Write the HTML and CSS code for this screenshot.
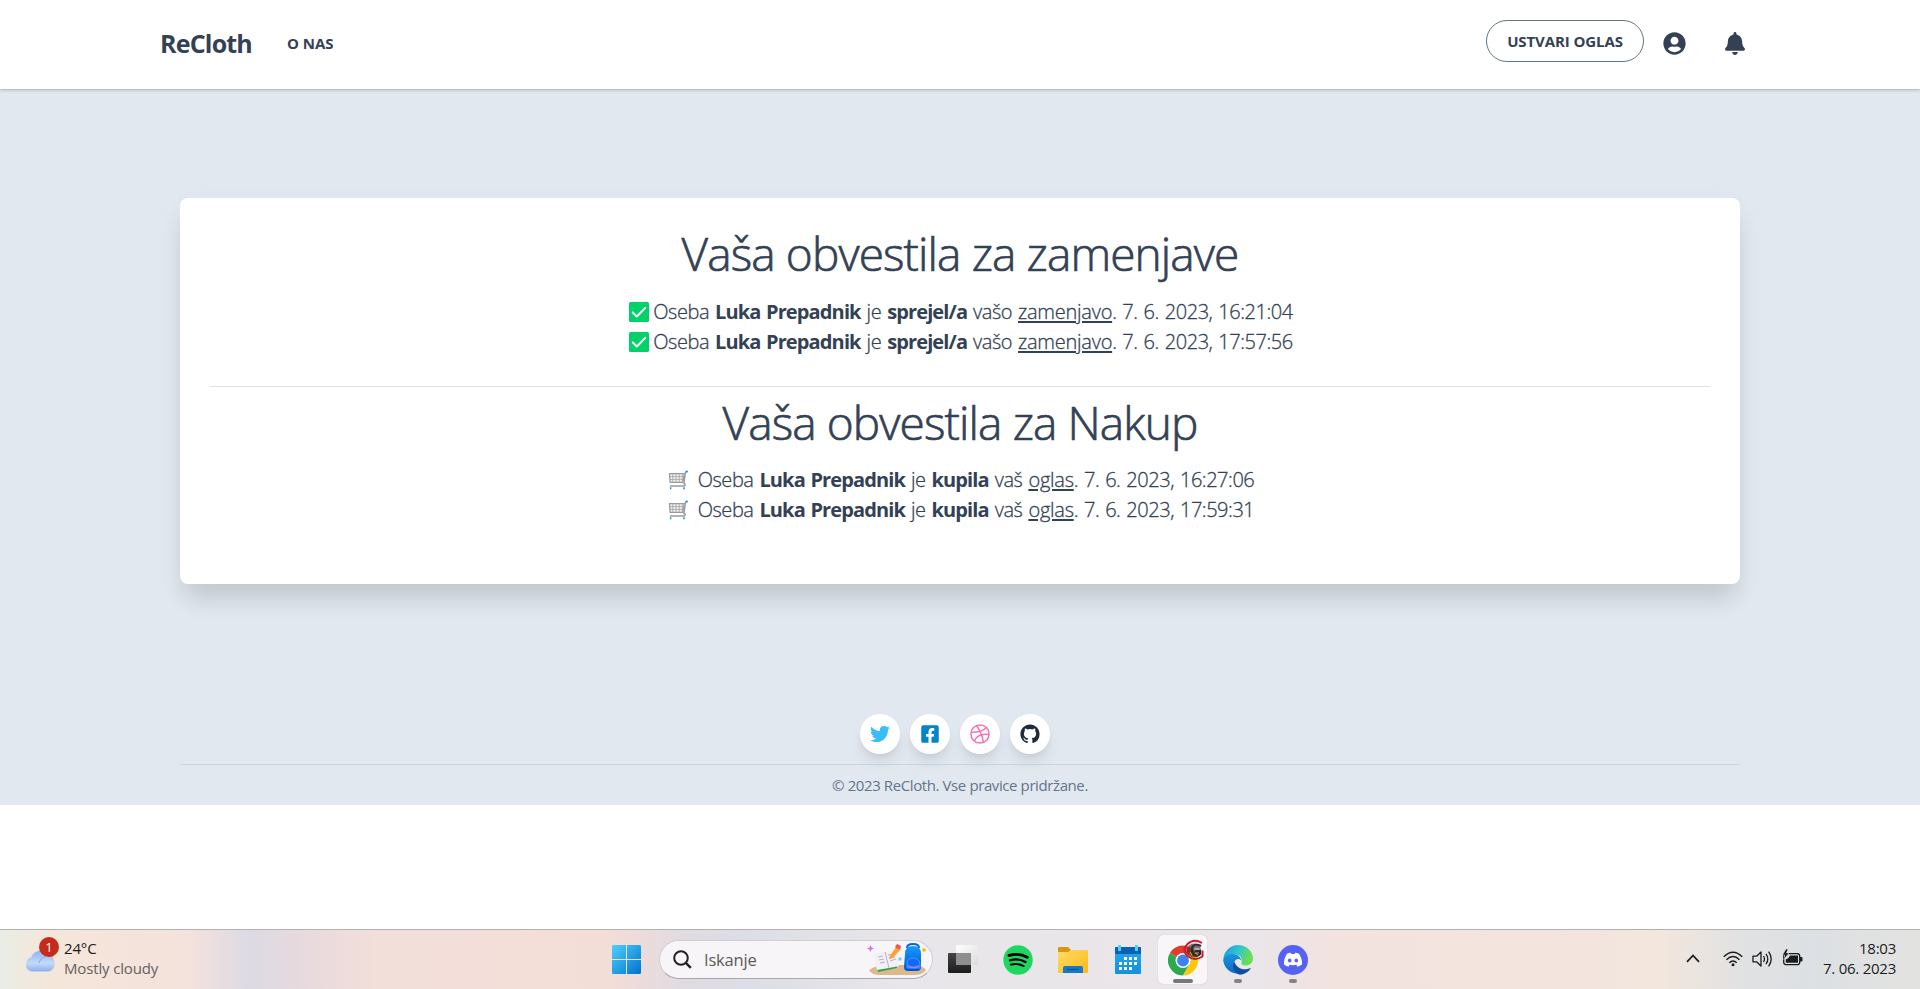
FILE: index.html
```html
<!DOCTYPE html>
<html lang="sl">
<head>
<meta charset="utf-8">
<title>ReCloth</title>
<link rel="stylesheet" href="styles.css">
</head>
<body>
<svg width="0" height="0" class="defs">
  <defs>
    <linearGradient id="win" x1="0" y1="0" x2="1" y2="1"><stop offset="0" stop-color="#4fd0fb"/><stop offset="1" stop-color="#0072d0"/></linearGradient>
    <linearGradient id="cloud" x1="0" y1="0" x2="0" y2="1"><stop offset="0" stop-color="#8fb2ee"/><stop offset=".6" stop-color="#c4daf8"/><stop offset="1" stop-color="#8baeec"/></linearGradient>
    <linearGradient id="folder" x1="0" y1="0" x2="1" y2="1"><stop offset="0" stop-color="#ffdc66"/><stop offset="1" stop-color="#fbb917"/></linearGradient>
    <linearGradient id="cal" x1="0" y1="0" x2="0" y2="1"><stop offset="0" stop-color="#28a8ea"/><stop offset="1" stop-color="#1490df"/></linearGradient>
    <linearGradient id="dark" x1="0" y1="0" x2="0" y2="1"><stop offset="0" stop-color="#444"/><stop offset="1" stop-color="#1c1c1c"/></linearGradient>
    <linearGradient id="pane" x1="0" y1="0" x2="1" y2="1"><stop offset="0" stop-color="#fff"/><stop offset="1" stop-color="#dcdcdc"/></linearGradient>
    <linearGradient id="edgeTop" x1="0" y1="0" x2="1" y2=".35"><stop offset="0" stop-color="#1a93d8"/><stop offset=".5" stop-color="#2fc2d6"/><stop offset="1" stop-color="#6be04f"/></linearGradient>
    <linearGradient id="edgeLeft" x1="0" y1="0" x2="0" y2="1"><stop offset="0" stop-color="#1796dc"/><stop offset="1" stop-color="#1268c4"/></linearGradient>
    <linearGradient id="bag" x1="0" y1="0" x2="0" y2="1"><stop offset="0" stop-color="#169bff"/><stop offset="1" stop-color="#0050d8"/></linearGradient>
    <symbol id="check" viewBox="0 0 20 20"><rect width="20" height="20" rx="1.6" fill="#00d26a"/><path d="M3.8 10.4l4 4.1 8.4-8.6" fill="none" stroke="#f4f4f4" stroke-width="2.1" stroke-linecap="round" stroke-linejoin="round"/></symbol>
    <symbol id="cart" viewBox="0 0 22 20"><g fill="none" stroke="#9b9b9b"><path d="M1.500 3.300H17L15.600 12.500H2.200z" stroke-width="1.300" fill="#efefef"/><path d="M5 3.500v9M8.400 3.500v9M11.800 3.500v9M15 3.500v9M2 6.400h14.500M2 9.400h14" stroke-width=".7"/><path d="M20 1.200L18.300 2 16.600 13.700q1.800.4 1.400 1.700l-.8.9H2.200" stroke-width="1.500"/></g><path d="M18.400 .4h2.400v1.500h-2.400zM2 17.600h1.500v2H2zM15.900 17.600h1.600v2h-1.600z" fill="#218fc8"/></symbol>
  </defs>
</svg>

<nav class="navbar">
  <div class="nav-left">
    <a class="brand">ReCloth</a>
    <a class="nav-link">O NAS</a>
  </div>
  <div class="nav-right">
    <a class="create">USTVARI OGLAS</a>
    <svg class="user" viewBox="0 0 496 512"><path fill="currentColor" d="M248 8C111 8 0 119 0 256s111 248 248 248 248-111 248-248S385 8 248 8zm0 96c48.600 0 88 39.400 88 88s-39.400 88-88 88-88-39.400-88-88 39.400-88 88-88zm0 344c-58.700 0-111.300-26.600-146.500-68.200 18.800-35.400 55.600-59.800 98.500-59.800 2.400 0 4.800.4 7.100 1.100 13 4.200 26.600 6.900 40.900 6.900 14.300 0 28-2.700 40.900-6.900 2.300-.7 4.700-1.100 7.100-1.100 42.900 0 79.700 24.400 98.500 59.800C359.300 421.400 306.700 448 248 448z"/></svg>
    <svg class="bell" viewBox="0 0 448 512"><path fill="currentColor" d="M224 512c35.320 0 63.970-28.650 63.970-64H160.030c0 35.350 28.650 64 63.970 64zm215.390-149.710c-19.320-20.760-55.470-51.990-55.470-154.290 0-77.700-54.480-139.900-127.940-155.160V32c0-17.670-14.320-32-31.980-32s-31.980 14.330-31.980 32v20.840C118.560 68.100 64.080 130.300 64.080 208c0 102.300-36.150 133.530-55.470 154.290-6 6.450-8.660 14.160-8.610 21.710.11 16.400 12.980 32 32.100 32h383.800c19.120 0 32-15.600 32.100-32 .05-7.550-2.610-15.270-8.610-21.710z"/></svg>
  </div>
</nav>

<main class="page">
  <section class="card">
    <h1 class="title">Vaša obvestila za zamenjave</h1>
    <ul class="list">
      <li class="item"><svg class="check"><use href="#check"/></svg><span>Oseba <b>Luka Prepadnik</b> je <b>sprejel/a</b> vašo <a>zamenjavo</a>. 7. 6. 2023, 16:21:04</span></li>
      <li class="item"><svg class="check"><use href="#check"/></svg><span>Oseba <b>Luka Prepadnik</b> je <b>sprejel/a</b> vašo <a>zamenjavo</a>. 7. 6. 2023, 17:57:56</span></li>
    </ul>
    <hr class="rule">
    <h1 class="title">Vaša obvestila za Nakup</h1>
    <ul class="list">
      <li class="item"><svg class="cart"><use href="#cart"/></svg><span>Oseba <b>Luka Prepadnik</b> je <b>kupila</b> vaš <a>oglas</a>. 7. 6. 2023, 16:27:06</span></li>
      <li class="item"><svg class="cart"><use href="#cart"/></svg><span>Oseba <b>Luka Prepadnik</b> je <b>kupila</b> vaš <a>oglas</a>. 7. 6. 2023, 17:59:31</span></li>
    </ul>
  </section>

  <footer class="footer">
    <div class="social">
      <a class="dot twitter"><svg width="20" height="20" viewBox="0 0 512 512"><path fill="currentColor" d="M459.370 151.716c.325 4.548.325 9.097.325 13.645 0 138.720-105.583 298.558-298.558 298.558-59.452 0-114.680-17.219-161.137-47.106 8.447.974 16.568 1.299 25.340 1.299 49.055 0 94.213-16.568 130.274-44.832-46.132-.975-84.792-31.188-98.112-72.772 6.498.974 12.995 1.624 19.818 1.624 9.421 0 18.843-1.300 27.614-3.573-48.081-9.747-84.143-51.980-84.143-102.985v-1.299c13.969 7.797 30.214 12.670 47.431 13.319-28.264-18.843-46.781-51.005-46.781-87.391 0-19.492 5.197-37.360 14.294-52.954 51.655 63.675 129.300 105.258 216.365 109.807-1.624-7.797-2.599-15.918-2.599-24.040 0-57.828 46.782-104.934 104.934-104.934 30.213 0 57.502 12.670 76.670 33.137 23.715-4.548 46.456-13.320 66.599-25.340-7.798 24.366-24.366 44.833-46.132 57.827 21.117-2.273 41.584-8.122 60.426-16.243-14.292 20.791-32.161 39.308-52.628 54.253z"/></svg></a>
      <a class="dot facebook"><svg width="18" height="20" viewBox="0 0 448 512"><path fill="currentColor" d="M400 32H48A48 48 0 0 0 0 80v352a48 48 0 0 0 48 48h137.250V327.690h-63V256h63v-54.640c0-62.150 37-96.480 93.670-96.480 27.140 0 55.520 4.840 55.520 4.840v61h-31.270c-30.810 0-40.420 19.120-40.420 38.730V256h68.780l-11 71.690h-57.780V480H400a48 48 0 0 0 48-48V80a48 48 0 0 0-48-48z"/></svg></a>
      <a class="dot dribbble"><svg width="20" height="20" viewBox="0 0 20 20" fill="none" stroke="currentColor" stroke-width="1.500"><circle cx="10" cy="10" r="9.100"/><path d="M6.500 1.700C10 6.200 12.300 11 13.500 18.300M1 8.200C7 8.500 12.500 7.300 16.300 3.400M4.200 16.900C6.800 12 12 9.400 19 10.600"/></svg></a>
      <a class="dot github"><svg width="20" height="20" viewBox="0 0 24 24"><path fill="currentColor" d="M12 .5C5.650.5.500 5.650.500 12c0 5.080 3.290 9.390 7.860 10.910.58.11.79-.25.79-.55v-2.100c-3.200.7-3.870-1.370-3.870-1.370-.52-1.330-1.280-1.680-1.280-1.680-1.040-.71.080-.7.080-.7 1.160.08 1.770 1.190 1.770 1.190 1.030 1.760 2.700 1.250 3.350.96.100-.75.400-1.250.73-1.540-2.550-.29-5.240-1.280-5.240-5.680 0-1.260.45-2.280 1.180-3.090-.12-.29-.51-1.460.11-3.040 0 0 .97-.31 3.160 1.180a10.900 10.900 0 0 1 5.760 0c2.190-1.490 3.150-1.180 3.150-1.180.63 1.580.24 2.750.12 3.040.74.810 1.180 1.830 1.180 3.090 0 4.410-2.690 5.390-5.250 5.670.41.360.78 1.060.78 2.130v3.120c0 .3.210.66.790.55A11.500 11.500 0 0 0 23.500 12C23.500 5.650 18.350.5 12 .5z"/></svg></a>
    </div>
    <div class="copyright">© 2023 ReCloth. Vse pravice pridržane.</div>
  </footer>
</main>

<div class="taskbar">
  <div class="weather">
    <div class="weather-icon">
      <svg width="32" height="38" viewBox="0 0 32 38"><circle cx="22" cy="17" r="7.500" fill="#f28a1c"/><path d="M8 34.500a7.200 7.200 0 0 1-1-14 9.500 9.500 0 0 1 17-2.200 8.300 8.300 0 0 1 .6 16.200z" fill="url(#cloud)"/><path d="M15 26c2-6 7-8 11-6.500" fill="none" stroke="#7fa4e6" stroke-width="1"/></svg>
      <span class="badge">1</span>
    </div>
    <div class="weather-text"><div>24°C</div><div class="muted">Mostly cloudy</div></div>
  </div>
  <div class="apps">
    <svg class="start" width="29" height="29" viewBox="0 0 29 29" fill="url(#win)"><path d="M1.500 0H14v14H0V1.500Q0 0 1.500 0zM15 0h12.500Q29 0 29 1.500V14H15zM0 15h14v14H1.500Q0 29 0 27.500zM15 15h14v12.500q0 1.500-1.500 1.500H15z"/></svg>
    <div class="search">
      <svg width="19" height="19" viewBox="0 0 19 19" fill="none" stroke="#222" stroke-width="2"><circle cx="8" cy="8" r="6.800"/><path d="M12.800 12.800l5 5" stroke-width="2.400"/></svg>
      <span class="search-label">Iskanje</span>
      <svg class="art" width="60" height="34" viewBox="0 0 60 34"><path d="M2 27q7-5 20-5h24q11 1 13 5-3 5-12 5H14Q4 32 2 27z" fill="#dcb98d"/><path d="M8 12l17-4 5 17-19 4z" fill="#31a04d"/><path d="M7 11l10-2 2 0 9-3 4 17-10 2-12 2z" fill="#f3f0fa"/><path d="M18 9l4 16M11 14l5-1M12 17l5-1M13 20l5-1M21 12l6-1M22 15l6-1M23 18l6-2" stroke="#a6a0be" stroke-width=".8"/><path d="M23 13l6-9 4 3-7 8-4 1z" fill="#ffa32d"/><path d="M28 4l2-3 4 2-1 4z" fill="#ef5350"/><path d="M40 5q0-4 6-4t6 4" fill="none" stroke="#0767cf" stroke-width="2"/><path d="M38 11q0-8 8-8t8 8v13q0 4-4 4h-9q-4 0-4-4z" fill="url(#bag)"/><path d="M40 21q0-6 6-6t7 6v4H40z" fill="#126af4" stroke="#2fa6ff"/><path d="M41 23q5 3 11 0" fill="none" stroke="#b47bf5" stroke-width="1.500"/><path d="M3.500 2l1 2.500L7 5.500 4.500 6.500l-1 2.500-1-2.500L0 5.500l2.500-1z" fill="#d66cf3"/><circle cx="57" cy="7" r="1.800" fill="#ffb000"/><circle cx="33" cy="16" r="1.800" fill="#6ad7f4"/></svg>
    </div>
    <div class="app"><svg width="32" height="32" viewBox="0 0 32 32"><rect x="1" y="9" width="23" height="20" rx="1" fill="url(#dark)"/><rect x="9" y="1" width="22" height="20" rx="1" fill="url(#pane)"/><path d="M9 9h15v12H9z" fill="#8f8f8f"/></svg></div>
    <div class="app"><svg width="30" height="30" viewBox="0 0 30 30"><circle cx="15" cy="15" r="14.700" fill="#1ed760"/><g fill="none" stroke="#000" stroke-linecap="round"><path d="M6 10.500q10-3 18.300 1.700" stroke-width="2.900"/><path d="M7 15.300q8.500-2.300 15.500 1.700" stroke-width="2.300"/><path d="M7.700 19.600q7-1.800 13 1.500" stroke-width="1.900"/></g></svg></div>
    <div class="app"><svg width="30" height="28" viewBox="0 0 30 28"><path d="M0 2q0-1 1-1h9l3 3-3 4H0z" fill="#d9970c"/><path d="M0 6h10l3-2h16q1 0 1 1v21q0 1-1 1H0z" fill="url(#folder)"/><path d="M5 27v-5q0-2 2-2h16q2 0 2 2v5z" fill="#1478cc"/><path d="M9 23.500h12" stroke="#0b4c91" stroke-width="1.200"/></svg></div>
    <div class="app"><svg width="26" height="29" viewBox="0 0 26 29"><rect y="2" width="26" height="27" rx="1" fill="url(#cal)"/><path d="M1 2h24q1 0 1 1v6H0V3q0-1 1-1z" fill="#0862b4"/><path d="M3 0h3v6H3zM20 0h3v6h-3z" fill="#51d0f4"/><path d="M9 12h3v3H9zM14 12h3v3h-3zM19 12h3v3h-3zM4 17h3v3H4zM9 17h3v3H9zM14 17h3v3h-3zM19 17h3v3h-3zM4 22h3v3H4zM9 22h3v3H9zM14 22h3v3h-3z" fill="#fff"/></svg></div>
    <div class="app active">
      <svg class="chrome" width="36" height="38" viewBox="0 0 36 38"><path d="M15 22.500L2 15A15 15 0 0 1 28 15z" fill="#e33b2e"/><path d="M2 15A15 15 0 0 0 15 37.500L21.500 26.300 15 22.500z" fill="#2da94f"/><path d="M28 15a15 15 0 0 1-13 22.500l6.500-11.200V15z" fill="#fdc70c"/><circle cx="15" cy="22.500" r="7.500" fill="#fff"/><circle cx="15" cy="22.500" r="5.900" fill="#3b83f0"/><circle cx="26" cy="12.500" r="7" fill="#4a3432" opacity=".7"/><path d="M34 5Q26 0 19.500 6T20 18.500Q27 23.500 34.500 18.500V12.500" fill="none" stroke="#c51f31" stroke-width="2"/><path d="M33 8q-6-3-8 0t0 8q4 3 7 0v-3h-5" fill="none" stroke="#2b2929" stroke-width="2.200"/><path d="M29.500 5q-2.500-.5-4.500 1M26.500 11h5" stroke="#c9c3c6" stroke-width="1.300" fill="none"/><path d="M22 14l2 3M27 15l3 2" stroke="#d8a02c"/></svg>
      <i class="run wide"></i>
    </div>
    <div class="app"><svg width="30" height="30" viewBox="0 0 30 30"><path d="M.3 15A15 15 0 0 1 15 0c8 0 15 6 15 13.500 0 4.500-3.500 7-7.500 7-3 0-4.500-1-4-2.500 1-3 0-8-6-8.500C7 9 1.500 11 .3 15z" fill="url(#edgeTop)"/><path d="M.2 15.500C1 10 7 8 12 9.300c4 1 6 4 6.500 6.700-2-3-6-2.500-7 1C10 23 16 27.500 22 27A15 15 0 0 1 .2 15.500z" fill="url(#edgeLeft)"/><path d="M11.500 17C8 21 11 28 17 29.800c5-.5 9-3 11-7-4 2.200-10 2-13-.8-2-1.800-3-3.500-3.500-5z" fill="#104f9f"/></svg><i class="run"></i></div>
    <div class="app"><svg width="30" height="30" viewBox="0 0 30 30"><circle cx="15" cy="15" r="15" fill="#5562f4"/><path d="M9 8.800q1.800-.9 3.800-1.100l.6 1.200h3.200l.6-1.200q2 .2 3.800 1.100 3.500 5.200 3 10.700-2 1.600-4.500 2.200l-1-1.700 1-.6q-4.500 1.500-9 0l1 .6-1 1.700Q8 21.100 6 19.500q-.5-5.500 3-10.700z" fill="#fff"/><ellipse cx="11.700" cy="15.500" rx="1.800" ry="2" fill="#5562f4"/><ellipse cx="18.300" cy="15.500" rx="1.800" ry="2" fill="#5562f4"/></svg><i class="run"></i></div>
  </div>
  <div class="tray">
    <svg width="14" height="9" viewBox="0 0 14 9" fill="none" stroke="#1b1b1b" stroke-width="1.700"><path d="M1 7.800L7 1.500l6 6.300"/></svg>
    <svg class="wifi" width="20" height="16" viewBox="0 0 20 16" fill="none" stroke="#1b1b1b" stroke-width="1.400"><path d="M.7 5.800q9.300-9 18.600 0M3.500 8.800q6.500-6.400 13 0M6.300 11.700q3.700-3.500 7.400 0"/><circle cx="10" cy="13.700" r="1.500" fill="#1b1b1b" stroke="none"/></svg>
    <svg class="sound" width="21" height="18" viewBox="0 0 21 18" fill="none" stroke="#1b1b1b" stroke-width="1.300"><path d="M1 6.200h3.600L9 2v14l-4.400-4.200H1zM11.500 6q2 3 0 6M14 3.800q3.600 5.200 0 10.400M16.600 1.700q5.200 7.300 0 14.600" stroke-linejoin="round"/></svg>
    <svg class="battery" width="21" height="17" viewBox="0 0 21 17"><rect x="1.700" y="4.700" width="16" height="11" rx="2.500" fill="none" stroke="#1b1b1b" stroke-width="1.300"/><path d="M8 6.500h8v7.300H3.800v-3.300q3-1 4.200-4zM18 8h1.500q1 0 1 1v2.500q0 1-1 1H18z" fill="#1b1b1b"/><path d="M4 0L.5 6h2.300L1.800 10.500 7 4H4.500L6 0z" fill="#1b1b1b" stroke="#dfe1e2" stroke-width=".5"/></svg>
    <div class="clock"><div class="time">18:03</div><div class="date">7. 06. 2023</div></div>
  </div>
</div>
</body>
</html>
```
FILE: styles.css
```css
* { box-sizing: border-box; }
body {
  margin: 0;
  height: 989px;
  overflow: hidden;
  display: flex;
  flex-direction: column;
  background: #fff;
  color: #334155;
  font-family: "Open Sans", "Noto Sans", sans-serif;
}
svg { display: block; flex: none; }
.defs { position: absolute; }

.navbar {
  height: 89px;
  flex: none;
  display: flex;
  justify-content: space-between;
  padding: 0 174px 0 160px;
  background: #fff;
  box-shadow: 0 1px 3px rgba(0, 0, 0, .25);
  z-index: 1;
}
.nav-left, .nav-right { display: flex; align-items: center; height: 87px; }
.nav-left { height: 85px; }
.brand { font-size: 25px; font-weight: 700; letter-spacing: -.8px; width: 127px; line-height: 34px; }
.nav-link { font-size: 15px; font-weight: 700; letter-spacing: -.05px; }
.create {
  width: 158px;
  height: 42px;
  margin: -5px 19px 0 0;
  border: 1px solid #64748b;
  border-radius: 21px;
  font-size: 15px;
  line-height: 41px;
  font-weight: 700;
  letter-spacing: -.1px;
  text-align: center;
}
.user { width: 23px; height: 23px; margin-right: 39px; }
.bell { width: 20px; height: 23px; margin-right: 1px; }

.page {
  height: 716px;
  flex: none;
  padding: 109px 180px 0;
  background: #e2e8f0;
}
.card {
  height: 386px;
  padding: 31px 30px 0;
  border-radius: 8px;
  background: #fff;
  box-shadow: 0 20px 25px -5px rgba(0, 0, 0, .1), 0 10px 30px -3px rgba(0, 0, 0, .06);
  text-align: center;
}
.title {
  margin: 0;
  font-size: 46px;
  line-height: 48px;
  font-weight: 300;
  letter-spacing: -.88px;
  -webkit-text-stroke: .7px #334155;
  white-space: nowrap;
}
.list { margin: 20px 0 0; padding: 0 0 0 2px; list-style: none; }
.item {
  display: flex;
  justify-content: center;
  align-items: center;
  height: 30px;
  font-size: 20px;
  line-height: 30px;
  font-weight: 300;
  letter-spacing: -.46px;
  word-spacing: 1.2px;
  -webkit-text-stroke: .3px #334155;
  white-space: nowrap;
}
.item b { font-weight: 700; letter-spacing: -.87px; -webkit-text-stroke: 0; }
.item a { text-decoration: underline; text-underline-offset: 2px; letter-spacing: -.25px; }
.check { width: 20px; height: 20px; margin-right: 4px; }
.cart { width: 21px; height: 20px; margin-right: 9px; }
.rule { margin: 29px 0 11px; border: 0; border-top: 1px solid #e0e2e5; }
.rule ~ .list { margin-top: 19px; }

.footer { padding-top: 130px; }
.social { display: flex; justify-content: center; gap: 10px; padding: 0 10px 10px 0; }
.dot {
  width: 40px;
  height: 40px;
  display: flex;
  align-items: center;
  justify-content: center;
  border-radius: 50%;
  background: #fff;
  box-shadow: 0 10px 15px -3px rgba(0, 0, 0, .1), 0 4px 6px -2px rgba(0, 0, 0, .05);
}
.twitter { color: #38bdf8; }
.facebook { color: #0284c7; }
.dribbble { color: #f472b6; }
.github { color: #1e293b; }
.copyright {
  border-top: 1px solid #cbd5e1;
  padding-top: 9px;
  font-size: 15px;
  line-height: 22px;
  color: #64748b;
  text-align: center;
  letter-spacing: -.4px;
}

.taskbar {
  height: 60px;
  flex: none;
  margin-top: auto;
  display: flex;
  border-top: 1px solid #b4b2b1;
  background: linear-gradient(90deg, #e9ede5 0, #f5e6da 50px, #f4e2dc 190px, #dcdae4 250px, #e6d9de 295px, #f3dfda 380px, #f3ddd7 610px, #e1dbe1 680px, #dcdde6 740px, #e8e6ea 900px, #ebe6e9 1260px, #f3e3df 1340px, #f3e6dd 1660px, #e1e2e2 1740px, #dde0e4 1810px, #e2e3e0 1920px);
}
.weather { display: flex; flex: none; padding-left: 24px; width: 604px; }
.weather-icon { position: relative; width: 40px; padding-top: 7px; }
.badge {
  position: absolute;
  left: 15px;
  top: 7px;
  width: 20px;
  height: 20px;
  border-radius: 50%;
  background: #c42b1c;
  color: #fff;
  font-size: 13px;
  line-height: 20px;
  text-align: center;
}
.weather-text { padding-top: 8px; font-size: 15px; line-height: 20px; letter-spacing: -.15px; color: #1c1c1c; }
.muted { color: #66615e; }
.apps { display: flex; flex: none; }
.start { margin: 15px 18px 0 8px; }
.search {
  display: flex;
  align-items: center;
  flex: none;
  width: 274px;
  height: 39px;
  margin: 10px 2px 0 0;
  padding: 0 5px 0 13px;
  border: 1px solid #d2cdd0;
  border-bottom-color: #aaa7a9;
  border-radius: 20px;
  background: #f7f5f7;
}
.search-label { flex: 1; padding-left: 12px; font-size: 16.5px; letter-spacing: -.2px; color: #5c5a5b; }
.app {
  position: relative;
  width: 49px;
  height: 49px;
  margin: 5px 3px 0;
  display: flex;
  align-items: center;
  justify-content: center;
  border-radius: 5px;
}
.chrome { margin: -6px 0 0 6px; }
.active { background: #f8f6f8; box-shadow: 0 0 1px #aaa; }
.run { position: absolute; bottom: 1px; left: 21px; width: 8px; height: 4px; border-radius: 2px; background: #858384; }
.wide { left: 15px; width: 20px; background: #777; }
.tray { display: flex; margin-left: auto; padding: 0 24px 0 0; }
.tray > svg { margin-top: 24px; }
.tray > .wifi { margin: 21px 9px 0 23px; }
.tray > .sound { margin: 20px 9px 0 0; }
.tray > .battery { margin: 19px 0 0; }
.clock { width: 93px; padding-top: 8px; text-align: right; font-size: 15px; line-height: 20px; letter-spacing: -.25px; color: #1c1c1c; white-space: nowrap; }
```
